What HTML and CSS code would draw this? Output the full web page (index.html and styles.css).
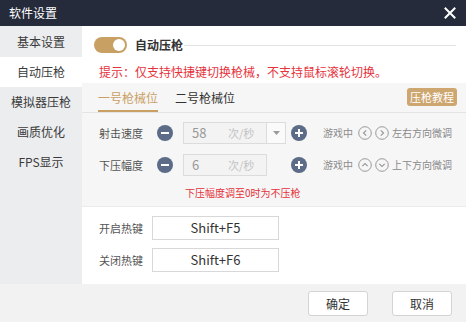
FILE: index.html
```html
<!DOCTYPE html>
<html lang="zh-CN">
<head>
<meta charset="utf-8">
<title>软件设置</title>
<link rel="stylesheet" href="styles.css">
</head>
<body>
<div class="window">
  <header class="titlebar">
    <span class="title">软件设置</span>
    <svg class="close" width="12" height="12" viewBox="0 0 12 12"><path d="M1.5 1.5 L10.5 10.5 M10.5 1.5 L1.5 10.5" stroke="#fff" stroke-width="2" stroke-linecap="square"/></svg>
  </header>
  <div class="body">
    <nav class="sidebar">
      <div class="nav-item">基本设置</div>
      <div class="nav-item active">自动压枪</div>
      <div class="nav-item">模拟器压枪</div>
      <div class="nav-item">画质优化</div>
      <div class="nav-item">FPS显示</div>
    </nav>
    <main class="content">
      <section class="top">
        <div class="switch-row">
          <span class="switch"><span class="knob"></span></span>
          <span class="switch-label">自动压枪</span>
          <span class="rule"></span>
        </div>
        <div class="hint">提示：仅支持快捷键切换枪械，不支持鼠标滚轮切换。</div>
      </section>
      <section class="panel">
        <div class="tabs">
          <span class="tab active">一号枪械位</span>
          <span class="tab">二号枪械位</span>
          <span class="tutorial">压枪教程</span>
        </div>
        <div class="rows">
          <div class="row">
            <span class="label">射击速度</span>
            <svg class="round-btn" width="16" height="16" viewBox="0 0 16 16"><circle cx="8" cy="8" r="8" fill="#5c6b87"/><rect x="4" y="7" width="8" height="2" fill="#fff"/></svg>
            <span class="field">
              <span class="value">58</span>
              <span class="unit">次/秒</span>
              <span class="drop"><svg width="7" height="4" viewBox="0 0 7 4"><path d="M0 0 H7 L3.5 4 Z" fill="#9a9a9a"/></svg></span>
            </span>
            <svg class="round-btn" width="16" height="16" viewBox="0 0 16 16"><circle cx="8" cy="8" r="8" fill="#5c6b87"/><rect x="4" y="7" width="8" height="2" fill="#fff"/><rect x="7" y="4" width="2" height="8" fill="#fff"/></svg>
            <span class="tip">游戏中</span>
            <span class="dirs">
              <svg width="14" height="14" viewBox="0 0 14 14"><circle cx="7" cy="7" r="6.3" fill="none" stroke="#9a9a9a" stroke-width="1"/><path d="M8.2 4.3 L5.5 7 L8.2 9.7" fill="none" stroke="#9a9a9a" stroke-width="1.2"/></svg>
              <svg width="14" height="14" viewBox="0 0 14 14"><circle cx="7" cy="7" r="6.3" fill="none" stroke="#9a9a9a" stroke-width="1"/><path d="M5.8 4.3 L8.5 7 L5.8 9.7" fill="none" stroke="#9a9a9a" stroke-width="1.2"/></svg>
            </span>
            <span class="tip">左右方向微调</span>
          </div>
          <div class="row">
            <span class="label">下压幅度</span>
            <svg class="round-btn" width="16" height="16" viewBox="0 0 16 16"><circle cx="8" cy="8" r="8" fill="#5c6b87"/><rect x="4" y="7" width="8" height="2" fill="#fff"/></svg>
            <span class="field short">
              <span class="value">6</span>
              <span class="unit">次/秒</span>
            </span>
            <svg class="round-btn" width="16" height="16" viewBox="0 0 16 16"><circle cx="8" cy="8" r="8" fill="#5c6b87"/><rect x="4" y="7" width="8" height="2" fill="#fff"/><rect x="7" y="4" width="2" height="8" fill="#fff"/></svg>
            <span class="tip">游戏中</span>
            <span class="dirs">
              <svg width="14" height="14" viewBox="0 0 14 14"><circle cx="7" cy="7" r="6.3" fill="none" stroke="#9a9a9a" stroke-width="1"/><path d="M4.3 8.2 L7 5.5 L9.7 8.2" fill="none" stroke="#9a9a9a" stroke-width="1.2"/></svg>
              <svg width="14" height="14" viewBox="0 0 14 14"><circle cx="7" cy="7" r="6.3" fill="none" stroke="#9a9a9a" stroke-width="1"/><path d="M4.3 5.8 L7 8.5 L9.7 5.8" fill="none" stroke="#9a9a9a" stroke-width="1.2"/></svg>
            </span>
            <span class="tip">上下方向微调</span>
          </div>
          <div class="note">下压幅度调至0时为不压枪</div>
        </div>
      </section>
      <section class="hotkeys">
        <div class="hk-row"><span class="label">开启热键</span><span class="hk-box">Shift+F5</span></div>
        <div class="hk-row"><span class="label">关闭热键</span><span class="hk-box">Shift+F6</span></div>
      </section>
    </main>
  </div>
  <footer class="footer">
    <span class="btn">确定</span>
    <span class="btn">取消</span>
  </footer>
</div>
</body>
</html>
```

FILE: styles.css
```css
* { box-sizing: border-box; }
html, body { margin: 0; padding: 0; }
body {
  font-family: "Noto Sans CJK SC", "Noto Sans", sans-serif;
  color: #333;
  background: #fff;
}
.window {
  width: 466px;
  height: 322px;
  display: flex;
  flex-direction: column;
  overflow: hidden;
}
.titlebar {
  height: 26px;
  background: #252b3a;
  display: flex;
  align-items: center;
  justify-content: space-between;
  padding: 0 9px 0 9px;
}
.title {
  color: #fff;
  font-size: 12px;
  line-height: 16px;
}
.close { display: block; margin-right: 1px; }
.body {
  flex: 1;
  display: flex;
  min-height: 0;
}
.sidebar {
  width: 82px;
  background: #ecedef;
  padding-top: 1px;
}
.nav-item {
  height: 30px;
  line-height: 30px;
  text-align: center;
  font-size: 12px;
  color: #3a3a3a;
}
.nav-item.active { background: #fff; }
.content {
  flex: 1;
  display: flex;
  flex-direction: column;
}
.top {
  height: 57px;
  background: #fff;
  padding-top: 11px;
}
.switch-row {
  display: flex;
  align-items: center;
  height: 16px;
  padding: 0 10px 0 12px;
}
.switch {
  width: 33px;
  height: 16px;
  border-radius: 8px;
  background: #c9a064;
  display: flex;
  justify-content: flex-end;
  align-items: center;
  padding-right: 2px;
}
.knob {
  width: 12px;
  height: 12px;
  border-radius: 50%;
  background: #fff;
}
.switch-label {
  margin-left: 8px;
  font-size: 12px;
  line-height: 16px;
  font-weight: 600;
  color: #333;
}
.rule {
  flex: 1;
  height: 1px;
  background: #e3e3e3;
  margin-left: 1px;
}
.hint {
  margin-top: 11px;
  padding-left: 17px;
  font-size: 12px;
  line-height: 16px;
  color: #e5323b;
}
.panel {
  background: #f6f6f6;
  height: 124px;
  border-bottom: 1px solid #ebebeb;
}
.tabs {
  height: 30px;
  display: flex;
  align-items: center;
  padding: 0 9px 0 16px;
  border-bottom: 1px solid #e4e4e4;
}
.tab {
  font-size: 12px;
  line-height: 28px;
  height: 29px;
  padding-top: 1px;
  color: #333;
  margin-right: 17px;
  border-bottom: 2px solid transparent;
}
.tab.active {
  color: #c9a064;
  border-bottom-color: #c9a064;
}
.tutorial {
  margin-left: auto;
  background: #cda670;
  color: #fff;
  font-size: 11px;
  line-height: 18px;
  height: 18px;
  padding: 0 3px;
  border-radius: 3px;
  margin-top: -1px;
}
.rows {
  padding: 9px 0 0 17px;
}
.row {
  display: flex;
  align-items: center;
  height: 22px;
  margin-bottom: 10px;
}
.label {
  font-size: 11px;
  line-height: 14px;
  color: #555;
  width: 58px;
}
.round-btn { display: block; }
.field {
  margin-left: 10px;
  width: 103px;
  height: 22px;
  border: 1px solid #dcdcdc;
  background: #f3f3f3;
  display: flex;
  align-items: center;
}
.field.short { width: 84px; }
.value {
  font-size: 13px;
  line-height: 20px;
  color: #999;
  padding-left: 8px;
  width: 44px;
}
.unit {
  font-size: 11px;
  color: #c2c2c2;
  line-height: 20px;
}
.drop {
  margin-left: auto;
  width: 19px;
  height: 20px;
  border-left: 1px solid #dcdcdc;
  background: #fafafa;
  display: flex;
  align-items: center;
  justify-content: center;
}
.drop svg { display: block; }
.field + .round-btn { margin-left: 5px; }
.field.short + .round-btn { margin-left: 24px; }
.tip {
  font-size: 10px;
  line-height: 14px;
  color: #8a8a8a;
}
.round-btn + .tip { margin-left: 16px; }
.dirs {
  display: flex;
  gap: 3px;
  margin: 0 3px 0 5px;
}
.dirs svg { display: block; }
.note {
  margin-top: 0;
  padding-left: 86px;
  font-size: 10px;
  line-height: 14px;
  color: #e5323b;
}
.hotkeys {
  flex: 1;
  background: #fff;
  padding: 9px 0 0 17px;
}
.hk-row {
  display: flex;
  align-items: center;
  height: 24px;
  margin-bottom: 8px;
}
.hk-row .label { width: 53px; }
.hk-box {
  width: 127px;
  height: 24px;
  border: 1px solid #d8d8d8;
  background: #fff;
  text-align: center;
  font-size: 13px;
  line-height: 22px;
  color: #333;
}
.footer {
  height: 38px;
  background: #f2f2f2;
  display: flex;
  align-items: center;
  justify-content: flex-end;
  padding-right: 14px;
  gap: 24px;
}
.btn {
  width: 60px;
  height: 25px;
  background: #fff;
  border: 1px solid #d3d3d3;
  border-radius: 3px;
  font-size: 12px;
  line-height: 23px;
  text-align: center;
  color: #333;
}
```
